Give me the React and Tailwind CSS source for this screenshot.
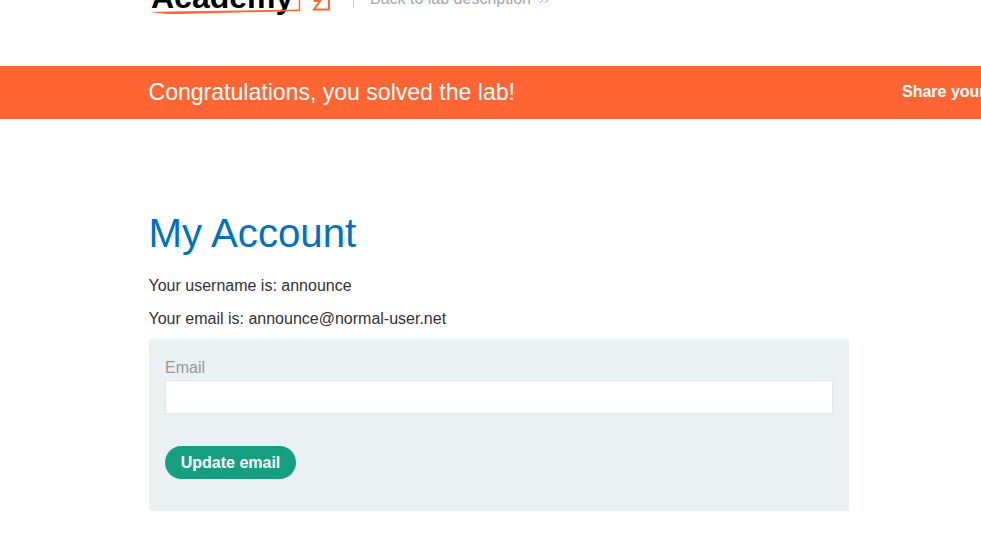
import React from 'react';

function Logo() {
  return (
    <div className="relative h-[16px] w-[190px] shrink-0">
      <span className="absolute left-[2px] bottom-[3px] text-[32px] leading-[32px] font-bold text-black">Academy</span>
      {/* swoosh and box around the wordmark */}
      <svg className="absolute left-0 top-0" width="190" height="16" viewBox="0 0 190 16" fill="none">
        <path d="M1 12 L20 11.500 L151 9.500 L151 11 L30 14 L18 14 Z" fill="#ff6633" />
        <path d="M150.500 0 V11" stroke="#ff6633" strokeWidth="1.500" />
        <path d="M165 1 H171 L165 9.500 H180 V0" stroke="#ff6633" strokeWidth="2" />
      </svg>
    </div>
  );
}

export default function App() {
  return (
    <div className="relative h-[547px] w-[981px] overflow-hidden bg-white font-['Liberation_Sans',Arial,sans-serif] text-[16px] text-[#333332]">
      <header className="flex h-[66px] items-start overflow-hidden pl-[149px]">
        <Logo />
        <div className="ml-[14px] h-[8px] w-px bg-[#cbd0d1]"></div>
        <div className="ml-[16px] -mt-[10px] flex items-center gap-2 text-[16px] leading-[18px] text-[#a6a6a6]">
          <span>Back to lab description</span>
          <svg width="11" height="10" viewBox="0 0 11 10" fill="none" stroke="#b3b3b3" strokeWidth="1">
            <path d="M1 1 L5 5 L1 9" />
            <path d="M6 1 L10 5 L6 9" />
          </svg>
        </div>
      </header>

      <div className="flex h-[53px] items-center overflow-hidden bg-[#ff6633] pl-[148.5px] text-white">
        <h4 className="text-[23.05px] leading-none whitespace-nowrap">Congratulations, you solved the lab!</h4>
        <span className="absolute left-[902px] -mt-[2px] font-bold whitespace-nowrap">Share your skills!</span>
      </div>

      <main className="pl-[148.5px] pt-[92px]">
        <h1 className="text-[40.2px] leading-[46px] text-[#0071bc]">My Account</h1>
        <p className="mt-[20px] leading-[18px]">Your username is: announce</p>
        <p className="mt-[15px] leading-[18px]">Your email is: announce@normal-user.net</p>
        <form className="mt-[11px] ml-[0.5px] h-[172px] w-[700px] bg-[#ebf0f2] px-4 pt-[20px]">
          <label className="block leading-[18px] text-[#999999]">Email</label>
          <input className="mt-[3px] block h-[34px] w-full border border-[#e6e6e6] bg-white" />
          <button className="mt-[32px] block h-[33px] w-[131px] rounded-full bg-[#159f81] font-bold text-white">Update email</button>
        </form>
      </main>
    </div>
  );
}
